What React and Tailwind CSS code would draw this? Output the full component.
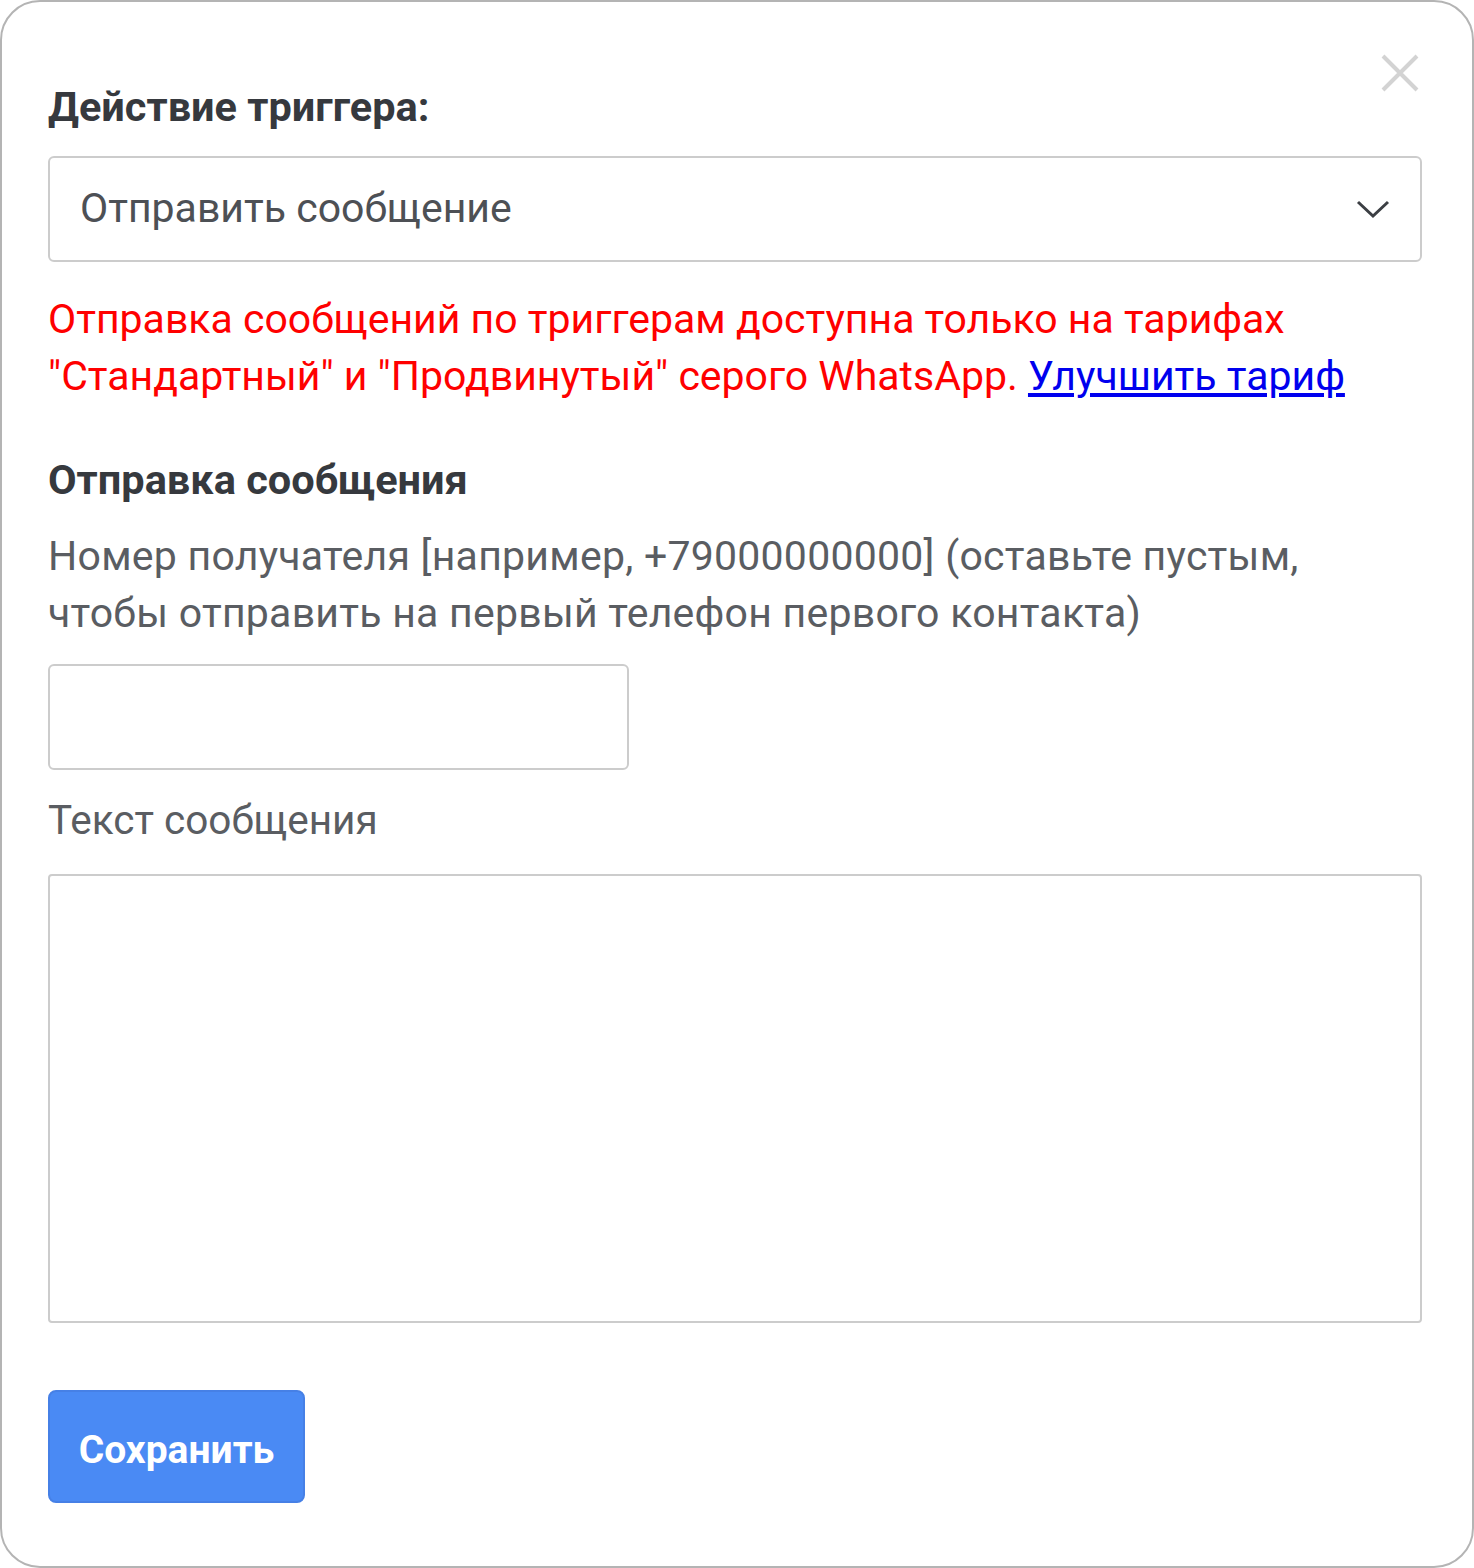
import React from 'react';

export default function App() {
  return (
    <div className="w-[1474px] h-[1568px] bg-white font-['Roboto',sans-serif]">
      <div className="relative h-full border-2 border-[#b4b4b4] rounded-[40px] pl-[46px] pr-[50px] pt-[78px]">
        {/* close */}
        <button className="absolute right-[52px] top-[51px] w-[40px] h-[40px] flex items-center justify-center">
          <svg width="40" height="40" viewBox="0 0 40 40" fill="none" stroke="#d3d3d3" strokeWidth="4">
            <path d="M3 3 L37 37 M37 3 L3 37" />
          </svg>
        </button>

        <h2 className="text-[41.5px] leading-[54px] font-bold text-[#36393e]">Действие триггера:</h2>

        <div className="mt-[22px] h-[106px] border-2 border-[#cccccc] rounded-[6px] flex items-center justify-between pl-[30px] pr-[30px]">
          <span className="text-[41px] text-[#4d5055]">Отправить сообщение</span>
          <svg width="34" height="20" viewBox="0 0 34 20" fill="none" stroke="#3c3f44" strokeWidth="3">
            <path d="M2 3 L17 17 L32 3" />
          </svg>
        </div>

        <p className="mt-[29px] text-[41px] leading-[57px] text-[#ff0000]">
          Отправка сообщений по триггерам доступна только на тарифах "Стандартный" и "Продвинутый" серого WhatsApp.{' '}
          <a href="#" className="text-[#0000ee] underline">Улучшить тариф</a>
        </p>

        <h3 className="mt-[46px] text-[41.5px] leading-[57px] font-bold text-[#36393e]">Отправка сообщения</h3>

        <p className="mt-[20px] text-[41px] leading-[57px] tracking-[0.25px] text-[#5a5d62] w-[1340px]">
          Номер получателя [например, +79000000000] (оставьте пустым, чтобы отправить на первый телефон первого контакта)
        </p>

        <div className="mt-[22px] w-[581px] h-[106px] border-2 border-[#cccccc] rounded-[6px]"></div>

        <p className="mt-[22px] text-[40.5px] leading-[57px] text-[#5a5d62]">Текст сообщения</p>

        <div className="mt-[25px] h-[449px] border-2 border-[#cccccc] rounded-[4px]"></div>

        <button className="mt-[67px] w-[257px] h-[113px] pt-[8px] rounded-[8px] bg-[#4a8af4] border-2 border-[#4680e6] text-white text-[39px] font-bold">
          Сохранить
        </button>
      </div>
    </div>
  );
}
